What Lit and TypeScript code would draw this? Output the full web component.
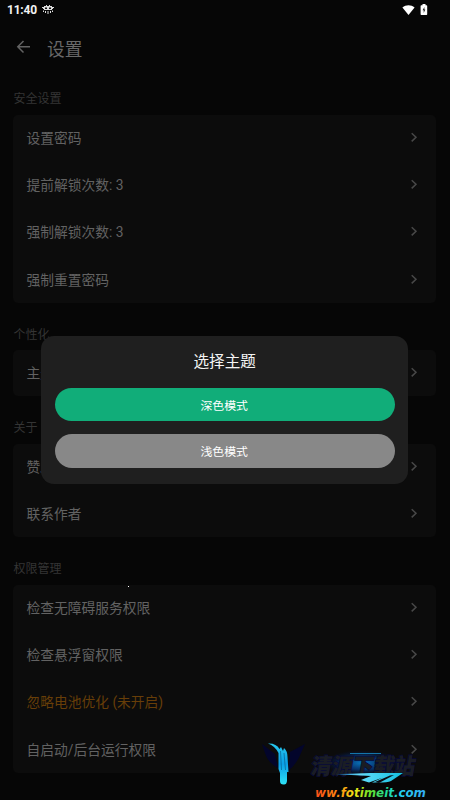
import { LitElement, html, css, svg } from "lit";
import { customElement, property } from "lit/decorators.js";

interface Item {
  label: string;
  warn?: boolean;
}

interface Section {
  title: string;
  items: Item[];
}

const SECTIONS: Section[] = [
  {
    title: "安全设置",
    items: [
      { label: "设置密码" },
      { label: "提前解锁次数: 3" },
      { label: "强制解锁次数: 3" },
      { label: "强制重置密码" },
    ],
  },
  { title: "个性化", items: [{ label: "主题" }] },
  { title: "关于", items: [{ label: "赞助" }, { label: "联系作者" }] },
  {
    title: "权限管理",
    items: [
      { label: "检查无障碍服务权限" },
      { label: "检查悬浮窗权限" },
      { label: "忽略电池优化 (未开启)", warn: true },
      { label: "自启动/后台运行权限" },
    ],
  },
];

@customElement("status-bar")
class StatusBar extends LitElement {
  static styles = css`
    :host {
      display: flex;
      align-items: center;
      height: 20px;
      padding: 0 22px 0 7px;
      color: #f2f2f2;
      font: 700 12px/20px Roboto, sans-serif;
    }
    .time {
      width: 30px;
      letter-spacing: -0.2px;
    }
    .alien {
      margin-left: 5px;
    }
    .space {
      flex: 1;
    }
    .battery {
      margin: -1px 0 0 5px;
    }
    svg {
      display: block;
    }
  `;
  render() {
    return html`
      <span class="time">11:40</span>
      <svg class="alien" width="12" height="10" viewBox="0 0 12 10" fill="#dedede">
        <path d="M2 1H4V0H5V1H7V0H8V1H10V2H11V4H10V5H2V4H1V2H2Z" />
        <path fill="#111" d="M3 2.500H5V4H3ZM7 2.500H9V4H7Z" />
        <path d="M0 2H1V3H0ZM11 2H12V3H11ZM1 5.500H2V7H1ZM3 6H4V8H3ZM5.500 6H6.500V9H5.500ZM8 6H9V8H8ZM10 5.500H11V7H10Z" />
      </svg>
      <span class="space"></span>
      <svg width="13" height="10" viewBox="0 0 13 10">
        <path fill="#fff" d="M.4 2.500C4 -.400 9 -.400 12.600 2.500L6.500 9.900Z" />
      </svg>
      <svg class="battery" width="8" height="12" viewBox="0 0 8 12">
        <path fill="#fff" d="M2.500 0H5.500V1.200H6.500Q7.200 1.200 7.200 2V10.200Q7.200 11 6.500 11H1.300Q.600 11 .600 10.200V2Q.600 1.200 1.300 1.200H2.500Z" />
        <path fill="#222" d="M4.400 3 2.600 6.300H3.700V9L5.300 5.600H4.400Z" />
      </svg>
    `;
  }
}

@customElement("settings-section")
class SettingsSection extends LitElement {
  @property({ attribute: false }) section!: Section;

  static styles = css`
    :host {
      display: block;
    }
    .title {
      height: 18px;
      padding-left: 0.5px;
      color: #343434;
      font-size: 12px;
      line-height: 20px;
    }
    .card {
      display: flex;
      flex-direction: column;
      gap: 1.4px;
      margin-top: 7.5px;
      background: #0c0c0c;
      border-radius: 5px;
    }
    .row {
      display: flex;
      align-items: center;
      justify-content: space-between;
      height: 46px;
      padding: 0 18px 0 13.5px;
      color: #626262;
      font-size: 13.750px;
      line-height: 20px;
    }
    .warn {
      color: #673e08;
    }
  `;
  render() {
    return html`
      <div class="title">${this.section.title}</div>
      <div class="card">
        ${this.section.items.map(
          (item) => html`
            <div class="row">
              <span class=${item.warn ? "warn" : ""}>${item.label}</span>
              <svg width="8" height="12" viewBox="0 0 8 12" fill="none" stroke="#484848" stroke-width="1.500">
                <path d="M1.700 1.300 6 5.300 1.700 9.400" />
              </svg>
            </div>
          `
        )}
      </div>
    `;
  }
}

@customElement("theme-dialog")
class ThemeDialog extends LitElement {
  static styles = css`
    :host {
      box-sizing: border-box;
      display: flex;
      flex-direction: column;
      padding: 15px 13.5px 16.5px;
      background: #1f1f1f;
      border-radius: 13px;
      color: #fff;
      text-align: center;
    }
    .heading {
      font-size: 15.600px;
      line-height: 22px;
      color: #f4f4f4;
    }
    .btn {
      height: 33.500px;
      border-radius: 17px;
      font-size: 11.900px;
      line-height: 36px;
      background: #888;
      text-indent: -1px;
    }
    .dark {
      margin: 14.500px 0 13px;
      background: #11ad79;
    }
  `;
  render() {
    return html`
      <div class="heading">选择主题</div>
      <div class="btn dark">深色模式</div>
      <div class="btn">浅色模式</div>
    `;
  }
}

@customElement("site-mark")
class SiteMark extends LitElement {
  static styles = css`
    :host {
      display: block;
    }
    svg {
      display: block;
    }
    .name {
      font: 900 22px "Noto Sans CJK SC", sans-serif;
      paint-order: stroke;
    }
    .url {
      font: italic 700 12.5px "DejaVu Sans", sans-serif;
    }
  `;
  render() {
    return html`<svg width="190" height="65" viewBox="260 735 190 65">
      ${svg`
      <defs>
        <linearGradient id="rainbow" gradientUnits="userSpaceOnUse" x1="315" y1="0" x2="426" y2="0">
          <stop offset="0" stop-color="#fa4b18" />
          <stop offset=".22" stop-color="#ff8a10" />
          <stop offset=".36" stop-color="#f4e614" />
          <stop offset=".5" stop-color="#62e02c" />
          <stop offset=".64" stop-color="#20dc96" />
          <stop offset=".76" stop-color="#20d0f0" />
          <stop offset="1" stop-color="#35aaf5" />
        </linearGradient>
        <linearGradient id="beam" x1="0" y1="0" x2="0" y2="1">
          <stop offset="0" stop-color="#27c8ee" />
          <stop offset=".5" stop-color="#0a9fe8" />
          <stop offset="1" stop-color="#2ee2f5" />
        </linearGradient>
        <linearGradient id="swoosh">
          <stop offset="0" stop-color="#0d62b8" />
          <stop offset=".35" stop-color="#63dcfa" />
          <stop offset="1" stop-color="#12bfe2" />
        </linearGradient>
        <radialGradient id="glow">
          <stop offset="0" stop-color="#0875bd" />
          <stop offset=".5" stop-color="#063c83" stop-opacity=".8" />
          <stop offset="1" stop-color="#04103c" stop-opacity="0" />
        </radialGradient>
      </defs>
      <path fill="#03052b" d="M262 744 275 754 278 768Q268 763 265 753ZM305 744 290 752 288 771Q297 764 301 753Z" />
      <path fill="url(#beam)" d="M268 743.500Q276 743 279.500 749L281 747 283 751 284 748Q287.500 751 287.500 757L288.500 772L287 772V781Q286.500 785 283.500 784.500Q280 784.500 280 781V773L278.500 769V753Q275 746 268 743.500Z" />
      <path fill="none" stroke="#07547f" stroke-width=".6" d="M280.500 751 281.500 770M284 753 285.500 770" />
      <ellipse cx="362" cy="763" rx="38" ry="13" fill="url(#glow)" />
      <path stroke="#188eca" stroke-width=".8" d="M350 753.500H381" />
      <text class="name" transform="translate(310 773.500) skewX(-10)" textLength="104" lengthAdjust="spacingAndGlyphs" fill="#1a1d24" stroke="#06093a" stroke-width="1.200">清源下载站</text>
      <path fill="url(#swoosh)" d="M336 774.300 370 773 403 773 391 781Q387 783 372 782.500L383 777.500 369 782.500 361 780 371 776Z" />
      <path fill="#0b0b12" d="M390 775.500 375 782 379 783 394 775Z" />
      <text class="url" x="315" y="796.500" textLength="111" lengthAdjust="spacingAndGlyphs" fill="url(#rainbow)">ww.fotimeit.com</text>
      `}
    </svg>`;
  }
}

@customElement("app-root")
class AppRoot extends LitElement {
  static styles = css`
    :host {
      position: relative;
      display: block;
      width: 450px;
      height: 800px;
      overflow: hidden;
      background: #060606;
      font-family: Roboto, "Noto Sans CJK SC", sans-serif;
    }
    .header {
      display: flex;
      align-items: center;
      gap: 16px;
      height: 56px;
      padding-left: 16px;
      color: #686868;
      font-size: 17.700px;
    }
    .back {
      margin-top: -2px;
    }
    .list {
      display: flex;
      flex-direction: column;
      gap: 22px;
      padding: 13px 14px 0 13px;
    }
    .speck {
      position: absolute;
      left: 128px;
      top: 586px;
      width: 1px;
      height: 1px;
      background: #fff;
    }
    theme-dialog {
      position: absolute;
      left: 41.300px;
      top: 336px;
      width: 366.800px;
      height: 148px;
    }
    site-mark {
      position: absolute;
      right: 0;
      bottom: 0;
    }
  `;
  render() {
    return html`
      <status-bar></status-bar>
      <div class="header">
        <svg class="back" width="15" height="14" viewBox="0 0 15 14" fill="none" stroke="#626262" stroke-width="1.500">
          <path d="M14 6.700H2M7.500 1 1.800 6.700 7.500 12.500" />
        </svg>
        <span>设置</span>
      </div>
      <div class="list">
        ${SECTIONS.map((s) => html`<settings-section .section=${s}></settings-section>`)}
      </div>
      <span class="speck"></span>
      <theme-dialog></theme-dialog>
      <site-mark></site-mark>
    `;
  }
}
